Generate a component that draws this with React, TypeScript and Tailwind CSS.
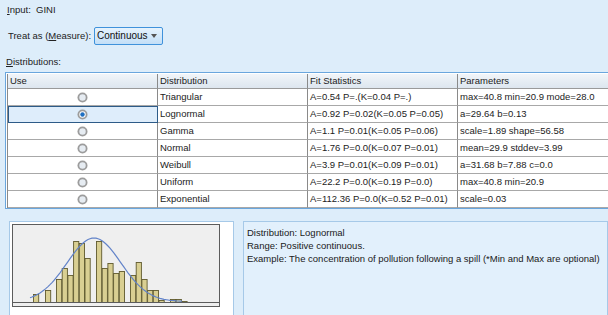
import React from 'react';

type Row = { name: string; fit: string; params: string };

const rows: Row[] = [
  { name: 'Triangular', fit: 'A=0.54 P=.(K=0.04 P=.)', params: 'max=40.8 min=20.9 mode=28.0' },
  { name: 'Lognormal', fit: 'A=0.92 P=0.02(K=0.05 P=0.05)', params: 'a=29.64 b=0.13' },
  { name: 'Gamma', fit: 'A=1.1 P=0.01(K=0.05 P=0.06)', params: 'scale=1.89 shape=56.58' },
  { name: 'Normal', fit: 'A=1.76 P=0.0(K=0.07 P=0.01)', params: 'mean=29.9 stddev=3.99' },
  { name: 'Weibull', fit: 'A=3.9 P=0.01(K=0.09 P=0.01)', params: 'a=31.68 b=7.88 c=0.0' },
  { name: 'Uniform', fit: 'A=22.2 P=0.0(K=0.19 P=0.0)', params: 'max=40.8 min=20.9' },
  { name: 'Exponential', fit: 'A=112.36 P=0.0(K=0.52 P=0.01)', params: 'scale=0.03' }
];

// bar left edge and top, in page coordinates
const bars: [number, number][] = [
  [33, 294], [45, 290], [56, 279], [61.7, 268], [67.4, 275], [73.1, 241], [78.8, 243],
  [84.5, 258], [96, 241], [101.7, 268], [107.4, 263], [113.1, 273], [118.8, 271],
  [130, 275], [135.7, 262], [141.4, 279], [147.1, 290], [152.8, 290], [158.5, 300],
  [170, 299], [175.7, 299], [181.4, 301]
];

function curvePoints() {
  const pts: string[] = [];
  for (let x = 30; x <= 182; x += 2) {
    const y = 301.5 - 63.5 * Math.exp(-((x - 94) ** 2) / (2 * 27 * 27));
    pts.push(`${x},${y.toFixed(1)}`);
  }
  return pts.join(' ');
}

function Radio({ checked }: { checked?: boolean }) {
  return (
    <svg width="11" height="11" viewBox="0 0 11 11">
      <circle cx="5.5" cy="5.5" r="5" fill="#9c9c9c" />
      <circle cx="5.5" cy="5.5" r="3.2" fill={checked ? '#ffffff' : '#e6ecf2'} />
      {checked && <circle cx="5.5" cy="5.5" r="2.2" fill="#1f6fc1" />}
    </svg>
  );
}

function Histogram() {
  return (
    <svg width="208" height="84" viewBox="12 224 208 84">
      <rect x="12.5" y="224.5" width="207" height="82" fill="#efefef" stroke="#5c5c5c" />
      {bars.map(([x, top]) => (
        <rect
          key={x}
          x={x + 0.5}
          y={top + 0.5}
          width="5.2"
          height={302 - top}
          fill="#d9cf92"
          stroke="#5f5a2e"
          strokeWidth="0.9"
        />
      ))}
      <line x1="12" y1="302.5" x2="220" y2="302.5" stroke="#5c5c5c" />
      <polyline points={curvePoints()} fill="none" stroke="#6283c9" strokeWidth="1.2" />
    </svg>
  );
}

export default function App() {
  return (
    <div className="h-[315px] w-[608px] overflow-hidden bg-[#ddedfa] font-['Liberation_Sans',Arial,sans-serif] text-[9.5px] leading-[12px] text-[#222]">
      <div className="pl-[7px] pt-[4px]">
        <span className="underline">I</span>nput:&nbsp;&nbsp;GINI
      </div>

      <div className="mt-[11px] flex items-center pl-[8px]">
        <span className="w-[86px] shrink-0 whitespace-nowrap">
          Treat as (<span className="underline">M</span>easure):
        </span>
        <div className="flex h-[18px] w-[69px] items-center justify-between rounded-[2px] border border-[#3f92db] bg-gradient-to-b from-[#e6f3fd] to-[#c3dff7] pl-[2px] pr-[5px] text-[10px] text-[#111]">
          <span>Continuous</span>
          <span className="h-0 w-0 border-x-[3.5px] border-t-[4px] border-x-transparent border-t-[#555]" />
        </div>
      </div>

      <div className="mt-[11px] pl-[6px]">
        <span className="underline">D</span>istributions:
      </div>

      <div className="ml-[5px] mt-[4px] border-y border-l border-[#6aa6dd] bg-white pl-[1px] pt-[1px]">
        <div className="grid grid-cols-[150px_150px_150px_1fr] border-l border-[#8a8a8a]">
          {['Use', 'Distribution', 'Fit Statistics', 'Parameters'].map((h, i) => (
            <div
              key={h}
              className={`h-[15px] border-b border-[#9a9a9a] bg-gradient-to-b from-[#f1f5f9] to-[#dde6ef] pl-[2px] leading-[14px] ${
                i < 3 ? 'border-r border-r-[#8a8a8a]' : ''
              }`}
            >
              {h}
            </div>
          ))}
          {rows.map((r, idx) => (
            <React.Fragment key={r.name}>
              <div
                className={`flex h-[17px] items-center justify-center border-b border-r border-b-[#a8a8a8] border-r-[#8a8a8a] ${
                  idx === 1 ? 'bg-[#deedfb] outline outline-[1.5px] -outline-offset-[1.5px] outline-[#2d5b88]' : ''
                }`}
              >
                <Radio checked={idx === 1} />
              </div>
              <div className="h-[17px] border-b border-r border-b-[#a8a8a8] border-r-[#8a8a8a] pl-[2px] leading-[16px]">
                {r.name}
              </div>
              <div className="h-[17px] whitespace-nowrap border-b border-r border-b-[#a8a8a8] border-r-[#8a8a8a] pl-[2px] leading-[16px]">
                {r.fit}
              </div>
              <div className="h-[17px] whitespace-nowrap border-b border-b-[#a8a8a8] pl-[2px] leading-[16px]">
                {r.params}
              </div>
            </React.Fragment>
          ))}
        </div>
      </div>

      <div className="mt-[12px] flex items-start">
        <div className="ml-[9px] h-[100px] w-[225px] border border-[#a6c9e8] bg-white pl-[2px] pt-[2px]">
          <Histogram />
        </div>
        <div className="ml-[9px] h-[100px] flex-1 whitespace-nowrap border border-[#a6c9e8] bg-[#e2f0fc] pl-[3px] pt-[4px] leading-[13px] text-[#1a1a1a]">
          <div>Distribution: Lognormal</div>
          <div>Range: Positive continuous.</div>
          <div>Example: The concentration of pollution following a spill (*Min and Max are optional)</div>
        </div>
      </div>
    </div>
  );
}
